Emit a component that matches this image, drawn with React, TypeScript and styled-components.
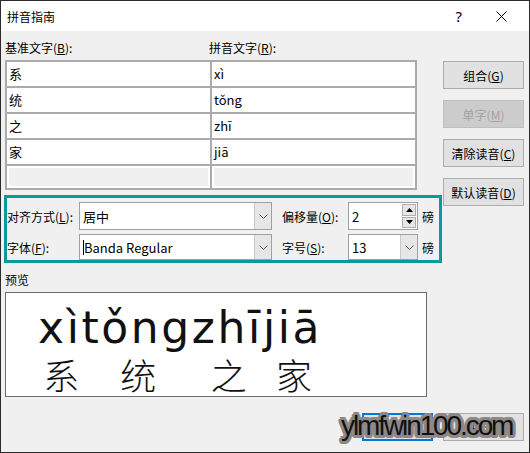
import { styled, createGlobalStyle } from 'styled-components';

const GlobalStyle = createGlobalStyle`
    html, body {
        margin: 0;
        padding: 0;
        background: #ffffff;
    }
    * {
        box-sizing: border-box;
    }
`;

const ui = `"Noto Sans CJK SC", "Noto Sans", sans-serif`;

const Window = styled.div`
    position: relative;
    width: 530px;
    height: 453px;
    border: 1px solid #2b2b2b;
    background: #f0f0f0;
    display: flex;
    flex-direction: column;
    font-family: ${ui};
    font-size: 12px;
    color: #000;
    overflow: hidden;
`;

const TitleBar = styled.div`
    height: 30px;
    background: #ffffff;
    display: flex;
    align-items: center;
    padding: 0 22px 0 6px;
`;

const Title = styled.span`
    font-size: 12px;
    line-height: 16px;
    margin-top: 1px;
`;

const HelpMark = styled.span`
    margin-left: auto;
    font-family: "Noto Sans", sans-serif;
    font-size: 15px;
    line-height: 18px;
    margin-right: 34px;
`;

const Body = styled.div`
    padding: 8px 5px 0 4px;
    display: flex;
    flex-direction: column;
`;

const Main = styled.div`
    display: flex;
`;

const LeftCol = styled.div`
    width: 437px;
    display: flex;
    flex-direction: column;
`;

const HeaderRow = styled.div`
    display: grid;
    grid-template-columns: 204px 1fr;
    height: 17px;
    line-height: 17px;
`;

const Table = styled.div`
    margin-top: 4px;
    width: 412px;
    display: grid;
    grid-template-columns: 203px 203px;
    grid-template-rows: 24px 24px 24px 24px 22px;
    gap: 2px;
    padding: 2px;
    background: #ababab;
`;

const Cell = styled.div<{ $empty?: boolean }>`
    background: ${(p) => (p.$empty ? '#f0f0f0' : '#ffffff')};
    box-shadow: ${(p) => (p.$empty ? 'inset 0 0 0 2px #ffffff' : 'none')};
    padding-left: 2px;
    font-size: 13px;
    line-height: 24px;
`;

const Highlight = styled.div`
    margin: 5px 0 0 -1px;
    width: 438px;
    border: 3px solid #0a9b98;
    padding-top: 4px;
    display: flex;
    flex-direction: column;
    gap: 4px;
`;

const FieldRow = styled.div<{ $h: number }>`
    display: flex;
    align-items: center;
    height: ${(p) => p.$h}px;
`;

const FieldLabel = styled.span<{ $w: number; $ml?: number }>`
    width: ${(p) => p.$w}px;
    margin-left: ${(p) => p.$ml || 0}px;
    flex-shrink: 0;
    line-height: 17px;
`;

const Combo = styled.div<{ $w: number }>`
    width: ${(p) => p.$w}px;
    height: 100%;
    flex-shrink: 0;
    display: flex;
    background: #ffffff;
    border: 1px solid #a0a0a0;
`;

const ComboText = styled.div`
    flex: 1;
    display: flex;
    align-items: center;
    padding-left: 3px;
    font-size: 13px;
    line-height: 17px;
`;

const Caret = styled.span`
    display: inline-block;
    width: 1px;
    height: 15px;
    background: #000;
`;

const DropButton = styled.div`
    width: 17px;
    height: 100%;
    background: #e6e6e6;
    border-left: 1px solid #c8c8c8;
    display: flex;
    align-items: center;
    justify-content: center;
`;

const SpinCol = styled.div`
    width: 16px;
    height: 100%;
    display: flex;
    flex-direction: column;
    padding: 1px;
    gap: 1px;
`;

const SpinButton = styled.div`
    flex: 1;
    background: #e6e6e6;
    border: 1px solid #adadad;
    display: flex;
    align-items: center;
    justify-content: center;
`;

const Unit = styled.span`
    margin-left: 4px;
    font-size: 12px;
    line-height: 17px;
`;

const PreviewLabel = styled.div`
    margin-top: 8px;
    height: 17px;
    line-height: 17px;
`;

const PreviewBox = styled.div`
    margin-top: 4px;
    width: 422px;
    height: 105px;
    background: #ffffff;
    border: 1px solid #6d6d6d;
    display: flex;
    align-items: flex-start;
    padding: 13px 0 0 32px;
`;

const RubyGroup = styled.div`
    display: flex;
    flex-direction: column;
    align-items: center;
`;

const Pinyin = styled.span`
    font-family: "DejaVu Sans", sans-serif;
    font-size: 44px;
    line-height: 44px;
    letter-spacing: 2.6px;
    color: #111;
`;

const Hanzi = styled.span`
    margin-top: 9px;
    padding-left: 3px;
    font-family: "Noto Sans CJK SC", sans-serif;
    font-weight: 300;
    font-size: 36px;
    line-height: 30px;
    color: #111;
`;

const SideCol = styled.div`
    margin: 22px 0 0 1px;
    width: 81px;
    display: flex;
    flex-direction: column;
    gap: 11px;
`;

const Button = styled.div<{ $disabled?: boolean; $w?: number; $primary?: boolean }>`
    width: ${(p) => p.$w || 81}px;
    height: 28px;
    display: flex;
    align-items: center;
    justify-content: center;
    background: ${(p) => (p.$disabled ? '#cccccc' : '#e1e1e1')};
    border: ${(p) =>
        p.$primary ? '2px solid #0078d7' : p.$disabled ? '1px solid #bfbfbf' : '1px solid #adadad'};
    color: ${(p) => (p.$disabled ? '#a3a3a3' : '#000')};
    font-size: 12px;
    line-height: 17px;
`;

const Footer = styled.div`
    margin-top: 16px;
    display: flex;
    justify-content: flex-end;
    gap: 10px;
`;

const outline = (() => {
    const parts: string[] = [];
    for (let a = 0; a < 360; a += 30) {
        const r = (a * Math.PI) / 180;
        parts.push(`${(Math.cos(r) * 3).toFixed(1)}px ${(Math.sin(r) * 3).toFixed(1)}px 0 #8e8787`);
    }
    return parts.join(', ');
})();

const Watermark = styled.div`
    position: absolute;
    left: 340px;
    top: 408px;
    font-family: "Liberation Sans", Arial, sans-serif;
    font-size: 28px;
    line-height: 34px;
    letter-spacing: -2.1px;
    color: #111;
    text-shadow: ${outline};
`;

function Chevron() {
    return (
        <svg width="9" height="5" viewBox="0 0 9 5">
            <path d="M0.5 0.5 L4.5 4.5 L8.5 0.5" fill="none" stroke="#606060" strokeWidth="1" />
        </svg>
    );
}

function Tri({ up }: { up?: boolean }) {
    return (
        <svg width="7" height="4" viewBox="0 0 7 4">
            <path d={up ? 'M0 4 L3.5 0 L7 4 Z' : 'M0 0 L7 0 L3.5 4 Z'} fill="#000" />
        </svg>
    );
}

const rows = [
    ['系', 'xì'],
    ['统', 'tǒng'],
    ['之', 'zhī'],
    ['家', 'jiā'],
];

export default function App() {
    return (
        <>
            <GlobalStyle />
            <Window>
                <TitleBar>
                    <Title>拼音指南</Title>
                    <HelpMark>?</HelpMark>
                    <svg width="11" height="11" viewBox="0 0 11 11">
                        <path d="M0.5 0.5 L10.5 10.5 M10.5 0.5 L0.5 10.5" stroke="#000" strokeWidth="1" />
                    </svg>
                </TitleBar>

                <Body>
                    <Main>
                        <LeftCol>
                            <HeaderRow>
                                <span>基准文字(<u>B</u>):</span>
                                <span>拼音文字(<u>R</u>):</span>
                            </HeaderRow>

                            <Table>
                                {rows.flatMap(([han, py]) => [
                                    <Cell key={han}>{han}</Cell>,
                                    <Cell key={py}>{py}</Cell>,
                                ])}
                                <Cell $empty />
                                <Cell $empty />
                            </Table>

                            <Highlight>
                                <FieldRow $h={28}>
                                    <FieldLabel $w={72}>对齐方式(<u>L</u>):</FieldLabel>
                                    <Combo $w={193}>
                                        <ComboText>居中</ComboText>
                                        <DropButton><Chevron /></DropButton>
                                    </Combo>
                                    <FieldLabel $w={66} $ml={10}>偏移量(<u>O</u>):</FieldLabel>
                                    <Combo $w={70}>
                                        <ComboText>2</ComboText>
                                        <SpinCol>
                                            <SpinButton><Tri up /></SpinButton>
                                            <SpinButton><Tri /></SpinButton>
                                        </SpinCol>
                                    </Combo>
                                    <Unit>磅</Unit>
                                </FieldRow>
                                <FieldRow $h={26}>
                                    <FieldLabel $w={72}>字体(<u>F</u>):</FieldLabel>
                                    <Combo $w={193}>
                                        <ComboText><Caret />Banda Regular</ComboText>
                                        <DropButton><Chevron /></DropButton>
                                    </Combo>
                                    <FieldLabel $w={66} $ml={10}>字号(<u>S</u>):</FieldLabel>
                                    <Combo $w={70}>
                                        <ComboText>13</ComboText>
                                        <DropButton><Chevron /></DropButton>
                                    </Combo>
                                    <Unit>磅</Unit>
                                </FieldRow>
                            </Highlight>

                            <PreviewLabel>预览</PreviewLabel>
                            <PreviewBox>
                                {rows.map(([han, py]) => (
                                    <RubyGroup key={han}>
                                        <Pinyin>{py}</Pinyin>
                                        <Hanzi>{han}</Hanzi>
                                    </RubyGroup>
                                ))}
                            </PreviewBox>
                        </LeftCol>

                        <SideCol>
                            <Button>组合(<u>G</u>)</Button>
                            <Button $disabled>单字(<u>M</u>)</Button>
                            <Button>清除读音(<u>C</u>)</Button>
                            <Button>默认读音(<u>D</u>)</Button>
                        </SideCol>
                    </Main>

                    <Footer>
                        <Button $primary $w={71}>确定</Button>
                        <Button>取消</Button>
                    </Footer>
                </Body>

                <Watermark>ylmfwin100.com</Watermark>
            </Window>
        </>
    );
}
